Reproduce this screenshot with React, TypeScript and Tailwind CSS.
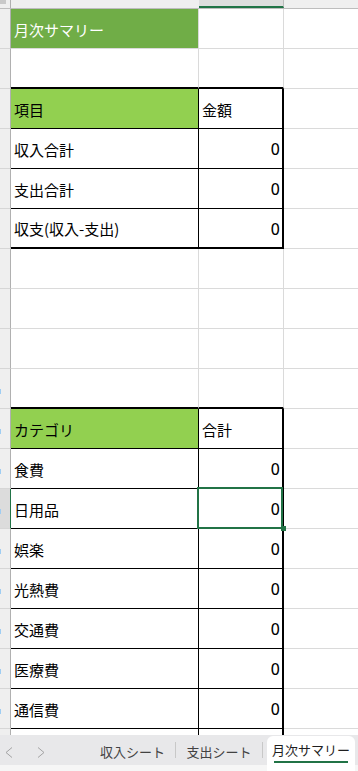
import React from 'react'

type RowKind = 'title' | 'blank' | 'edge' | 'head' | 'data' | 'last' | 'open'

interface Row {
  kind: RowKind
  a?: string
  b?: string
}

const rows: Row[] = [
  { kind: 'title', a: '月次サマリー' },
  { kind: 'edge' },
  { kind: 'head', a: '項目', b: '金額' },
  { kind: 'data', a: '収入合計', b: '0' },
  { kind: 'data', a: '支出合計', b: '0' },
  { kind: 'last', a: '収支(収入-支出)', b: '0' },
  { kind: 'blank' },
  { kind: 'blank' },
  { kind: 'blank' },
  { kind: 'edge' },
  { kind: 'head', a: 'カテゴリ', b: '合計' },
  { kind: 'data', a: '食費', b: '0' },
  { kind: 'data', a: '日用品', b: '0' },
  { kind: 'data', a: '娯楽', b: '0' },
  { kind: 'data', a: '光熱費', b: '0' },
  { kind: 'data', a: '交通費', b: '0' },
  { kind: 'data', a: '医療費', b: '0' },
  { kind: 'data', a: '通信費', b: '0' },
  { kind: 'open' },
]

const SELECTED = 12

// column A cell borders / fill per row kind
const aCls: Record<RowKind, string> = {
  title: 'bg-[#70ad47] text-white border-r border-b border-r-[#dadada] border-b-[#dadada]',
  blank: 'border-r border-b border-[#dadada]',
  edge: 'border-r border-r-[#dadada] border-b-2 border-b-black',
  head: 'bg-[#92d050] border-r border-b border-black',
  data: 'border-r border-b border-black',
  last: 'border-r border-black border-b-2',
  open: 'border-r border-black',
}

const bCls: Record<RowKind, string> = {
  title: 'border-r border-b border-[#dadada]',
  blank: 'border-r border-b border-[#dadada]',
  edge: 'border-r border-r-[#dadada] border-b-2 border-b-black',
  head: 'border-r-2 border-b border-black',
  data: 'border-r-2 border-b border-black',
  last: 'border-r-2 border-b-2 border-black',
  open: 'border-r-2 border-black',
}

function Chevron({ dir }: { dir: 'left' | 'right' }) {
  return (
    <svg width="8" height="11" viewBox="0 0 8 11" fill="none">
      <polyline
        points={dir === 'left' ? '7,0.5 1,5.5 7,10.5' : '1,0.5 7,5.5 1,10.5'}
        stroke="#a3a3a3"
        strokeWidth="1"
      />
    </svg>
  )
}

export default function App() {
  return (
    <div
      className="h-[771px] w-[358px] flex flex-col overflow-hidden bg-white text-black"
      style={{ fontFamily: '"Noto Sans CJK JP", "Noto Sans", sans-serif' }}
    >
      <div className="flex-1 overflow-hidden">
        {/* column headers */}
        <div className="flex h-[9px] border-b border-[#bdbdbd] bg-[#efefef]">
          <div className="w-[11px] border-r border-[#b0b0b0] relative">
            <div className="absolute left-0 top-0 w-[6px] h-[4px] bg-[#c9c9c9]" />
          </div>
          <div className="w-[188px]" />
          <div className="w-[85px] bg-[#dedede] border-b-2 border-[#217346] border-r border-r-[#bdbdbd]" />
          <div className="flex-1" />
        </div>

        {rows.map((row, i) => {
          const selected = i === SELECTED
          const twoDigit = i >= 9
          const isNum = row.kind !== 'head'
          return (
            <div key={i} className="flex h-10 text-[15px] leading-none">
              <div
                className={`w-[11px] shrink-0 border-b border-b-[#d6d6d6] border-r flex items-center ${
                  selected ? 'bg-[#dcdcdc] border-r-[#217346]' : 'bg-[#efefef] border-r-[#b0b0b0]'
                }`}
              >
                {twoDigit && <div className="w-px h-[5px] mt-[6px] bg-[#9fcdf2]" />}
              </div>
              <div className={`w-[188px] shrink-0 flex items-center pl-[3px] pt-[1px] ${aCls[row.kind]}`}>
                {row.a}
              </div>
              <div
                className={`relative w-[85px] shrink-0 flex items-center ${
                  isNum ? 'justify-end pr-[2px] pt-[4px] font-["DejaVu_Sans"] text-[15px]' : 'pl-[3px] pt-[1px]'
                } ${bCls[row.kind]}`}
              >
                {row.b}
                {selected && (
                  <>
                    <div className="absolute left-[-2px] top-[-2px] w-[86px] h-[42px] border-2 border-[#217346]" />
                    <div className="absolute left-[82px] top-[37px] w-[5px] h-[5px] bg-[#217346] z-10" />
                  </>
                )}
              </div>
              <div className="flex-1 border-b border-[#dadada]" />
            </div>
          )
        })}
      </div>

      {/* sheet tabs */}
      <div className="h-[36px] shrink-0 flex items-start bg-[linear-gradient(to_bottom,#e8e8ea_30px,#f6f6f6_30px)] text-[13px] text-[#424242]">
        <div className="w-[90px] h-[34px] flex items-center">
          <div className="ml-[5px]">
            <Chevron dir="left" />
          </div>
          <div className="ml-[24px]">
            <Chevron dir="right" />
          </div>
        </div>
        <div className="w-[85px] h-[34px] flex items-center justify-center">収入シート</div>
        <div className="w-px h-[16px] mt-[7px] bg-[#c8c8c8]" />
        <div className="w-[86px] h-[34px] flex items-center justify-center">支出シート</div>
        <div className="w-px h-[16px] mt-[7px] bg-[#c8c8c8]" />
        <div className="ml-[4px] mt-[1px] w-[88px] h-[35px] bg-white rounded-t-[6px] flex flex-col items-center pt-[7px] text-[#1f1f1f]">
          <span className="leading-none">月次サマリー</span>
          <div className="mt-[5px] w-[74px] h-[2px] bg-[#217346]" />
        </div>
      </div>
    </div>
  )
}
